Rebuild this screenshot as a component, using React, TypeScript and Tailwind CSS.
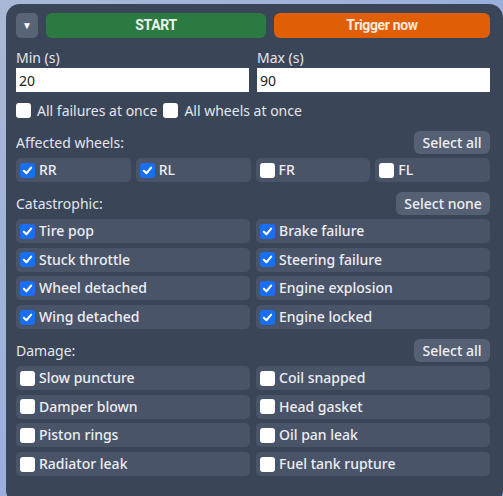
import React from "react";

const font = { fontFamily: '"Noto Sans", "Open Sans", sans-serif' };

function Box({ checked }: { checked: boolean }) {
  if (checked) {
    return (
      <span className="flex h-[15px] w-[15px] shrink-0 items-center justify-center rounded-[3px] bg-[#1a6ff0]">
        <svg width="11" height="11" viewBox="0 0 12 12">
          <path d="M2 6.3 L4.8 9 L10 2.8" fill="none" stroke="white" strokeWidth="2.2" strokeLinecap="round" strokeLinejoin="round" />
        </svg>
      </span>
    );
  }
  return <span className="block h-[15px] w-[15px] shrink-0 rounded-[3px] bg-white" />;
}

function Cell({ label, checked }: { label: string; checked: boolean }) {
  return (
    <div className="flex h-[24px] items-center gap-[4px] rounded-[5px] bg-[#4a5469] pl-[4px] text-[14px] font-medium text-[#eceef3]">
      <Box checked={checked} />
      <span className="leading-none">{label}</span>
    </div>
  );
}

function Header({ title, btn, btnW }: { title: string; btn: string; btnW: string }) {
  return (
    <div className="flex h-[23px] items-center justify-between">
      <span className="text-[14px] text-[#e3e6ec]">{title}</span>
      <button className={`flex h-[23px] items-center justify-center rounded-[6px] bg-[#566075] text-[14px] font-medium text-[#eef0f4] ${btnW}`}>
        {btn}
      </button>
    </div>
  );
}

export default function App() {
  const cat: [string, boolean][] = [
    ["Tire pop", true],
    ["Brake failure", true],
    ["Stuck throttle", true],
    ["Steering failure", true],
    ["Wheel detached", true],
    ["Engine explosion", true],
    ["Wing detached", true],
    ["Engine locked", true],
  ];
  const dmg: [string, boolean][] = [
    ["Slow puncture", false],
    ["Coil snapped", false],
    ["Damper blown", false],
    ["Head gasket", false],
    ["Piston rings", false],
    ["Oil pan leak", false],
    ["Radiator leak", false],
    ["Fuel tank rupture", false],
  ];
  return (
    <div className="h-[496px] w-[503px] overflow-hidden bg-gradient-to-br from-[#a9b8d6] to-[#8aa6e2]" style={font}>
      <div className="ml-[6px] mt-[4px] flex h-[500px] w-[497px] flex-col rounded-[14px] bg-[#3b4558] pl-[10px] pr-[13px] pt-[9px]">
        <div className="flex h-[25px] gap-[8px]">
          <button className="flex h-[25px] w-[22px] items-center justify-center rounded-[5px] bg-[#5a6477] text-[10px] text-white">
            ▼
          </button>
          <button className="flex flex-1 items-center justify-center rounded-[6px] bg-[#2b7a42] text-[14px] font-bold tracking-tight text-[#e9f2ea]" style={{ fontFamily: '"Roboto", sans-serif' }}>
            START
          </button>
          <button className="flex w-[216px] items-center justify-center rounded-[6px] bg-[#e05e06] text-[14px] font-bold tracking-tight text-[#fbe9dc]" style={{ fontFamily: '"Roboto", sans-serif' }}>
            Trigger now
          </button>
        </div>

        <div className="mt-[9px] grid grid-cols-2 gap-x-[8px]">
          <div className="flex flex-col">
            <span className="h-[21px] text-[14px] leading-[21px] text-[#e3e6ec]">Min (s)</span>
            <div className="flex h-[24px] items-center bg-white pl-[3px] text-[14px] text-[#222]">20</div>
          </div>
          <div className="flex flex-col">
            <span className="h-[21px] text-[14px] leading-[21px] text-[#e3e6ec]">Max (s)</span>
            <div className="flex h-[24px] items-center bg-white pl-[3px] text-[14px] text-[#222]">90</div>
          </div>
        </div>

        <div className="mt-[8px] flex h-[20px] items-center text-[14px] text-[#e3e6ec]">
          <Box checked={false} />
          <span className="ml-[6px]">All failures at once</span>
          <span className="ml-[6px]">
            <Box checked={false} />
          </span>
          <span className="ml-[6px]">All wheels at once</span>
        </div>

        <div className="mt-[11px]">
          <Header title="Affected wheels:" btn="Select all" btnW="w-[76px]" />
        </div>
        <div className="mt-[4px] grid grid-cols-4 gap-x-[5px]">
          <Cell label="RR" checked />
          <Cell label="RL" checked />
          <Cell label="FR" checked={false} />
          <Cell label="FL" checked={false} />
        </div>

        <div className="mt-[10px]">
          <Header title="Catastrophic:" btn="Select none" btnW="w-[94px]" />
        </div>
        <div className="mt-[4px] grid grid-cols-2 gap-x-[6px] gap-y-[4.7px]">
          {cat.map(([l, c]) => (
            <Cell key={l} label={l} checked={c} />
          ))}
        </div>

        <div className="mt-[10px]">
          <Header title="Damage:" btn="Select all" btnW="w-[76px]" />
        </div>
        <div className="mt-[4px] grid grid-cols-2 gap-x-[6px] gap-y-[4.7px]">
          {dmg.map(([l, c]) => (
            <Cell key={l} label={l} checked={c} />
          ))}
        </div>
      </div>
    </div>
  );
}
